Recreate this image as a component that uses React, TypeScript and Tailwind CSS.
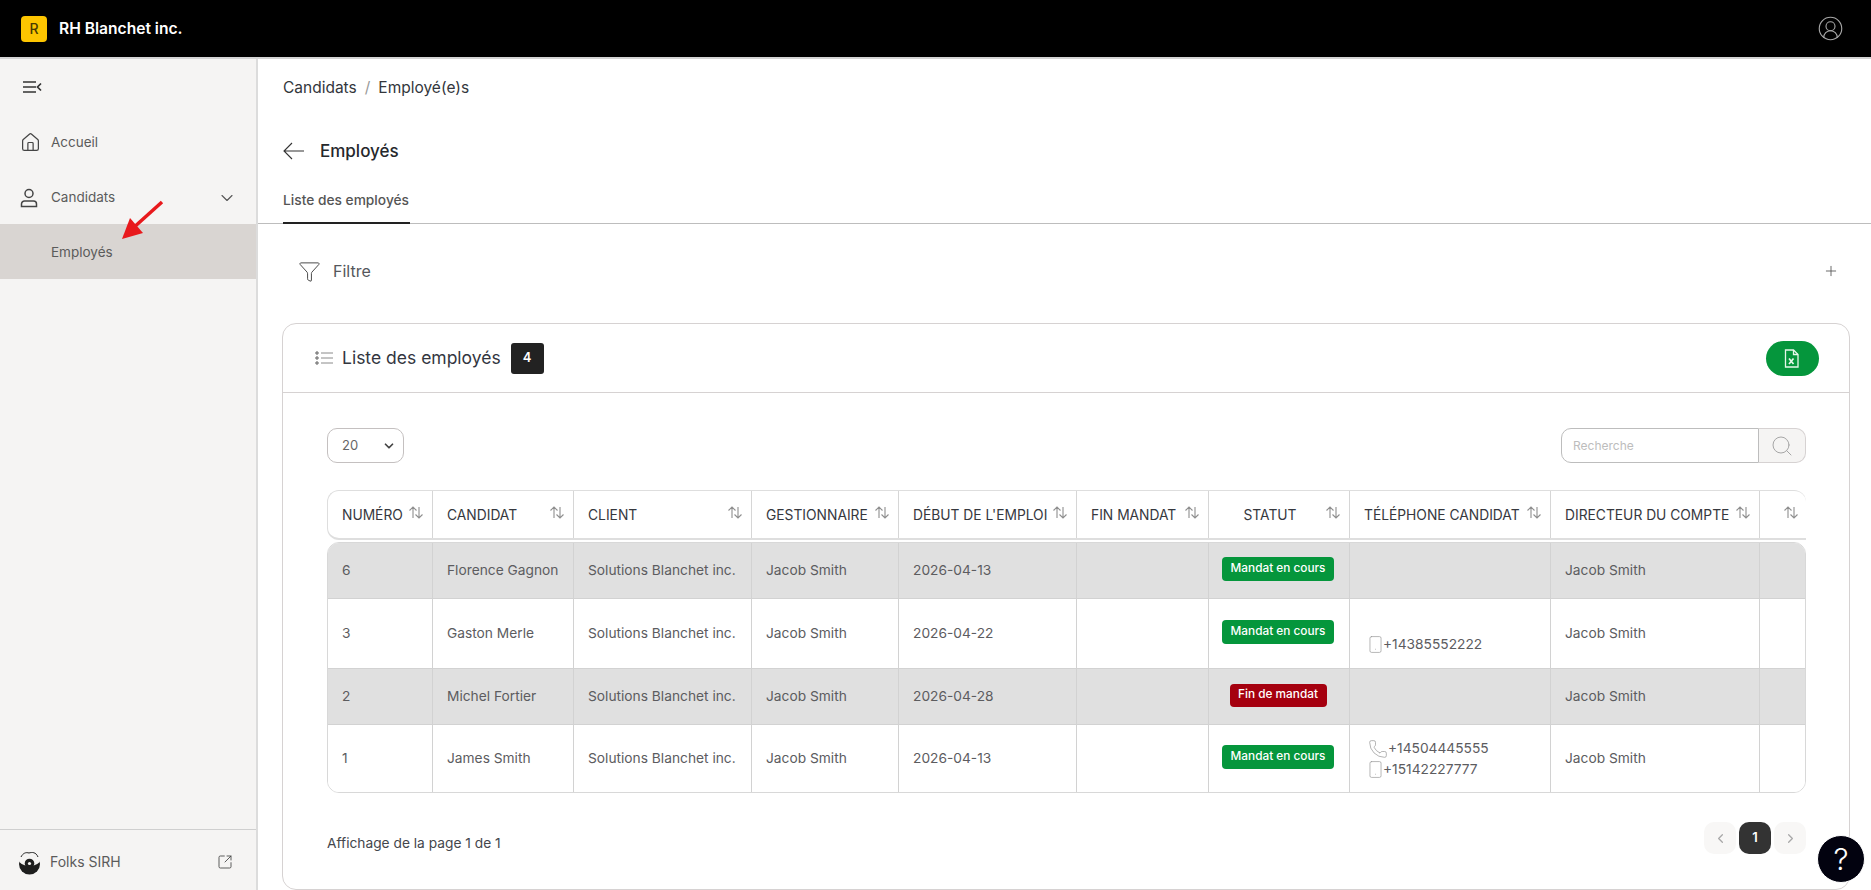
import { ReactNode } from "react";
import {
  ChevronDown,
  ChevronLeft,
  ChevronRight,
  CircleUserRound,
  Funnel,
  House,
  Phone,
  Plus,
  Search,
  Smartphone,
  SquareArrowOutUpRight,
} from "lucide-react";

const GRID = "grid grid-cols-[105px_141px_178px_147px_178px_132px_141px_201px_209px_47px]";

function SortIcon() {
  return (
    <svg width="16" height="13" viewBox="0 0 16 13" fill="none" stroke="#8f8f8f" strokeWidth="1.1" className="shrink-0">
      <path d="M5 12V1M1.500 4.500 5 1l3.500 3.500" />
      <path d="M11 1v11M7.500 8.500 11 12l3.500-3.500" />
    </svg>
  );
}

function HeadCell({ label, center }: { label?: string; center?: boolean }) {
  return (
    <div className={`relative flex h-full items-center border-r border-[#d6d6d6] pl-[14px] pr-[6px] pt-[1px] last:border-r-0 ${center ? "justify-center pr-[32px]" : ""}`}>
      {label && <span className="whitespace-nowrap text-[13.8px] font-normal text-[#36383e]">{label}</span>}
      <span className="absolute right-[8px] top-[15px]">
        <SortIcon />
      </span>
    </div>
  );
}

function Cell({ children, center }: { children?: ReactNode; center?: boolean }) {
  return (
    <div className={`flex items-center border-r border-[#d2d2d2] text-[13.75px] text-[#5c5c5f] last:border-r-0 ${center ? "justify-center pr-[2px]" : "pl-[14px]"}`}>
      {children}
    </div>
  );
}

function Badge({ type }: { type: "on" | "off" }) {
  return type === "on" ? (
    <span className="-mt-[3px] flex h-[24px] w-[112px] items-center justify-center rounded-[4px] bg-[#05963c] text-[11.8px] font-medium text-white">
      Mandat en cours
    </span>
  ) : (
    <span className="-mt-[3px] flex h-[23px] w-[97px] items-center justify-center rounded-[4px] bg-[#a5000f] text-[11.8px] font-medium text-white">
      Fin de mandat
    </span>
  );
}

const rows = [
  { n: "6", c: "Florence Gagnon", d: "2026-04-13", s: "on" as const, h: "h-[55px]", dark: true, tel: null },
  {
    n: "3",
    c: "Gaston Merle",
    d: "2026-04-22",
    s: "on" as const,
    h: "h-[70px]",
    dark: false,
    tel: (
      <div className="mt-[21px] flex items-center">
        <Smartphone size={19} strokeWidth={0.9} color="#9a9a9a" className="ml-[2px]" />
        <span className="-ml-[2px]">+14385552222</span>
      </div>
    ),
  },
  { n: "2", c: "Michel Fortier", d: "2026-04-28", s: "off" as const, h: "h-[56px]", dark: true, tel: null },
  {
    n: "1",
    c: "James Smith",
    d: "2026-04-13",
    s: "on" as const,
    h: "h-[68px]",
    dark: false,
    tel: (
      <div className="mt-[1px] flex flex-col leading-[21px]">
        <div className="flex items-center">
          <Phone size={20} strokeWidth={0.9} color="#9a9a9a" className="ml-[4px]" />
          <span>+14504445555</span>
        </div>
        <div className="flex items-center">
          <Smartphone size={19} strokeWidth={0.9} color="#9a9a9a" className="ml-[2px]" />
          <span className="-ml-[2px]">+15142227777</span>
        </div>
      </div>
    ),
  },
];

function SideItem({ icon, label, right }: { icon?: ReactNode; label: string; right?: ReactNode }) {
  return (
    <div className="flex h-[55px] items-center pl-[20px] pr-[19px] text-[13.5px] text-[#5b5b5b]">
      <span className="flex w-[31px] shrink-0 items-center">{icon}</span>
      <span className="flex-1">{label}</span>
      {right}
    </div>
  );
}

export default function App() {
  return (
    <div className="relative flex h-[890px] flex-col overflow-hidden bg-white font-['Inter',sans-serif]">
      <header className="flex h-[59px] shrink-0 items-center border-b-2 border-[#d4d4d4] bg-black pl-[21px] pr-[27px]">
        <div className="flex h-[26px] w-[26px] items-center justify-center rounded-[4px] bg-[#fdc500] text-[14px] font-medium text-[#4a3b00]">
          R
        </div>
        <span className="ml-[12px] flex-1 text-[15.6px] font-semibold text-white">RH Blanchet inc.</span>
        <CircleUserRound size={27} strokeWidth={1} color="#a8a8a8" />
      </header>

      <div className="flex min-h-0 flex-1">
        <aside className="flex w-[258px] shrink-0 flex-col border-r-2 border-[#dcdcdc] bg-[#f5f4f3]">
          <div className="flex h-[56px] items-center pl-[22px]">
            <svg width="20" height="14" viewBox="0 0 20 14" fill="none" stroke="#333" strokeWidth="1.700">
              <path d="M1 2h13M1 7h13M1 12h13M19 3.500 15.500 7l3.500 3.500" />
            </svg>
          </div>
          <SideItem icon={<House size={21} strokeWidth={1.4} color="#444" />} label="Accueil" />
          <SideItem
            icon={
              <svg width="18" height="20" viewBox="0 0 18 20" fill="none" stroke="#444" strokeWidth="1.500">
                <circle cx="9" cy="5.500" r="4" />
                <path d="M1.500 18.500v-2.500a3 3 0 0 1 3-3h9a3 3 0 0 1 3 3v2.500z" />
              </svg>
            }
            label="Candidats"
            right={<ChevronDown size={20} strokeWidth={1.3} color="#555" />}
          />
          <div className="relative -mt-[1px]">
            <div className="flex h-[55px] items-center bg-[#d9d5d2] pl-[51px] pt-[1px] text-[13.5px] text-[#5b5b5b]">Employés</div>
            <svg width="46" height="46" viewBox="0 0 46 46" className="absolute -top-[24px] left-[118px]">
              <path d="M44 2 14 29" stroke="#e8191c" strokeWidth="3.500" />
              <path d="M4 39 12 18 25 33z" fill="#e8191c" />
            </svg>
          </div>
          <div className="mt-auto flex h-[61px] items-center border-t border-[#cfcfcf] pl-[17px] pr-[23px] pt-[3px] text-[14px] text-[#5b5b5b]">
            <svg width="25" height="26" viewBox="0 0 25 26" className="shrink-0">
              <circle cx="12.500" cy="15" r="10.500" fill="#1e1e1e" />
              <ellipse cx="12.500" cy="10.500" rx="11" ry="6.500" fill="#f5f4f3" />
              <path d="M4 8c2-4 5-5 8-4 3-1 7-1 9 4" fill="none" stroke="#222" strokeWidth="1" />
              <circle cx="12.500" cy="14.500" r="4.800" fill="#1e1e1e" />
              <circle cx="12.500" cy="14.500" r="1.600" fill="#f5f4f3" />
            </svg>
            <span className="ml-[8px] flex-1">Folks SIRH</span>
            <SquareArrowOutUpRight size={16} strokeWidth={1.3} color="#444" />
          </div>
        </aside>

        <main className="flex min-w-0 flex-1 flex-col">
          <div className="flex h-[56px] items-center gap-[8px] pl-[25px] pt-[1px] text-[15.5px] text-[#33363c]">
            <span>Candidats</span>
            <span className="text-[#9a9a9a]">/</span>
            <span>Employé(e)s</span>
          </div>
          <div className="flex h-[72px] items-center pl-[25px]">
            <svg width="22" height="18" viewBox="0 0 22 18" fill="none" stroke="#333" strokeWidth="1.100">
              <path d="M21 9H1M9 1 1 9l8 8" />
            </svg>
            <span className="ml-[15px] mt-[1px] text-[17px] font-medium text-[#26282c]">Employés</span>
          </div>
          <div className="h-[37px] border-b border-[#bdbdbd] pl-[25px]">
            <div className="h-[37px] w-[127px] whitespace-nowrap border-b-2 border-[#222] pt-[3px] text-[13.75px] font-medium leading-[20px] text-[#555]">
              Liste des employés
            </div>
          </div>
          <div className="flex h-[94px] shrink-0 items-center pl-[40px] pr-[32px]">
            <Funnel size={23} strokeWidth={1} color="#444" />
            <span className="ml-[12px] flex-1 text-[16px] text-[#55575c]">Filtre</span>
            <Plus size={16} strokeWidth={1.3} color="#555" />
          </div>

          <section className="ml-[24px] mr-[21px] mt-[5px] h-[567px] shrink-0 rounded-[14px] border border-[#d6d2d2]">
            <div className="flex h-[69px] items-center border-b border-[#d6d2d2] pl-[32px] pr-[30px]">
              <svg width="18" height="14" viewBox="0 0 18 14" fill="none" stroke="#8a8a8a" strokeWidth="1" className="shrink-0">
                <path d="M6 2h12M6 7h12M6 12h12" />
                <circle cx="2" cy="2" r="1.300" fill="#8a8a8a" />
                <circle cx="2" cy="7" r="1.300" fill="#8a8a8a" />
                <circle cx="2" cy="12" r="1.300" fill="#8a8a8a" />
              </svg>
              <span className="ml-[9px] text-[17.5px] font-normal text-[#33363f]">Liste des employés</span>
              <span className="ml-[10px] flex h-[31px] w-[33px] items-center justify-center rounded-[3px] bg-[#222] text-[13px] font-semibold text-white">
                4
              </span>
              <button className="ml-auto flex h-[35px] w-[53px] items-center justify-center rounded-full bg-[#05963c] pr-[3px]">
                <svg width="15" height="19" viewBox="0 0 15 19" fill="none" stroke="#e6f7ea" strokeWidth="1.300">
                  <path d="M1.500 1h8l4.500 4.500V18H1.500z" />
                  <path d="M9.500 1v4.500H14" />
                  <path d="m5 9.500 4.500 5.500M9.500 9.500 5 15" strokeWidth="1.700" />
                </svg>
              </button>
            </div>

            <div className="pl-[44px] pr-[43px]">
              <div className="mt-[35px] flex h-[35px] items-stretch justify-between">
                <div className="flex w-[77px] items-center justify-between rounded-[10px] border border-[#c4c0c0] pl-[14px] pr-[7px] text-[13px] text-[#666]">
                  <span>20</span>
                  <ChevronDown size={14} strokeWidth={3} color="#444" />
                </div>
                <div className="flex w-[245px]">
                  <div className="flex flex-1 items-center rounded-l-[10px] border border-[#bdbdbd] pl-[11px] text-[12px] text-[#bdbdbd]">
                    Recherche
                  </div>
                  <div className="flex w-[47px] items-center justify-center rounded-r-[10px] border border-l-0 border-[#d6d2d2] bg-[#f5f4f3]">
                    <Search size={24} strokeWidth={1} color="#a6a6a6" />
                  </div>
                </div>
              </div>

              <div className={`${GRID} mt-[27px] h-[50px] w-full rounded-[12px] rounded-br-none border border-b-2 border-r-0 border-[#dedede]`}>
                <HeadCell label="NUMÉRO" />
                <HeadCell label="CANDIDAT" />
                <HeadCell label="CLIENT" />
                <HeadCell label="GESTIONNAIRE" />
                <HeadCell label="DÉBUT DE L'EMPLOI" />
                <HeadCell label="FIN MANDAT" />
                <HeadCell label="STATUT" center />
                <HeadCell label="TÉLÉPHONE CANDIDAT" />
                <HeadCell label="DIRECTEUR DU COMPTE" />
                <HeadCell />
              </div>

              <div className="mt-[2px] overflow-hidden rounded-[12px] border border-[#d8d8d8]">
                {rows.map((r, i) => (
                  <div
                    key={r.n}
                    className={`${GRID} ${r.h} ${r.dark ? "bg-[#e0e0e0]" : "bg-white"} ${i > 0 ? "border-t border-[#d2d2d2]" : ""}`}
                  >
                    <Cell>{r.n}</Cell>
                    <Cell>{r.c}</Cell>
                    <Cell>Solutions Blanchet inc.</Cell>
                    <Cell>Jacob Smith</Cell>
                    <Cell>{r.d}</Cell>
                    <Cell />
                    <Cell center>
                      <Badge type={r.s} />
                    </Cell>
                    <Cell>{r.tel}</Cell>
                    <Cell>Jacob Smith</Cell>
                    <Cell />
                  </div>
                ))}
              </div>

              <div className="mt-[29px] flex items-start justify-between">
                <span className="mt-[11px] text-[13.75px] leading-[20px] text-[#44464c]">Affichage de la page 1 de 1</span>
                <div className="flex items-center gap-[3px]">
                  <span className="flex h-[32px] w-[32px] items-center justify-center rounded-[10px] bg-[#f8f7f6]">
                    <ChevronLeft size={15} color="#a8a8a8" />
                  </span>
                  <span className="flex h-[32px] w-[32px] items-center justify-center rounded-[10px] bg-[#333] text-[13px] font-semibold text-white">
                    1
                  </span>
                  <span className="flex h-[32px] w-[32px] items-center justify-center rounded-[10px] bg-[#f8f7f6]">
                    <ChevronRight size={15} color="#a8a8a8" />
                  </span>
                </div>
              </div>
            </div>
          </section>
        </main>
      </div>

      <div className="absolute left-[1817px] top-[835px] flex h-[48px] w-[48px] items-center justify-center rounded-full border border-white bg-[#02020f] text-[30px] font-light text-white">
        ?
      </div>
    </div>
  );
}
